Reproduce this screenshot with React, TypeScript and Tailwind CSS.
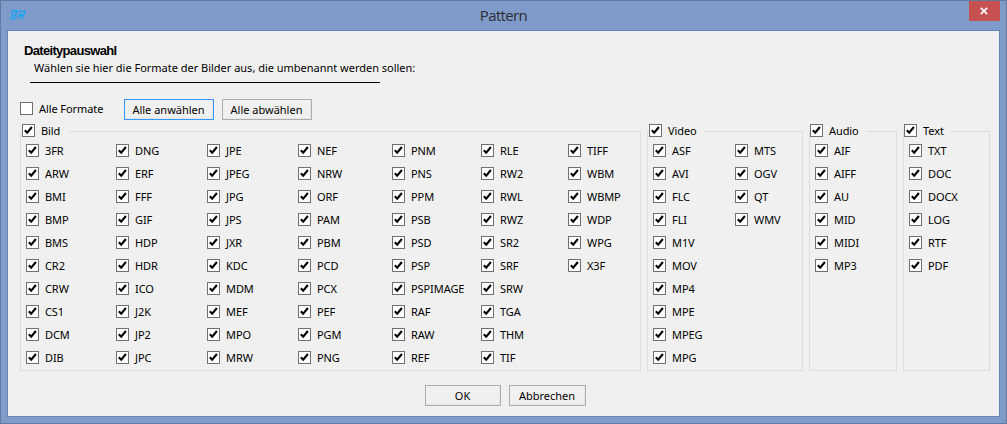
import { useState } from 'react';

type Group = {
  name: string;
  box: string;
  legend: string;
  body: string;
  columns: { width: string; items: string[] }[];
};

const groups: Group[] = [
  {
    name: 'Bild',
    box: 'w-[621px]',
    legend: 'w-[47px] ml-px',
    body: 'pl-[5px]',
    columns: [
      { width: 'w-[90px]', items: ['3FR', 'ARW', 'BMI', 'BMP', 'BMS', 'CR2', 'CRW', 'CS1', 'DCM', 'DIB'] },
      { width: 'w-[91px]', items: ['DNG', 'ERF', 'FFF', 'GIF', 'HDP', 'HDR', 'ICO', 'J2K', 'JP2', 'JPC'] },
      { width: 'w-[91px]', items: ['JPE', 'JPEG', 'JPG', 'JPS', 'JXR', 'KDC', 'MDM', 'MEF', 'MPO', 'MRW'] },
      { width: 'w-[94px]', items: ['NEF', 'NRW', 'ORF', 'PAM', 'PBM', 'PCD', 'PCX', 'PEF', 'PGM', 'PNG'] },
      { width: 'w-[89px]', items: ['PNM', 'PNS', 'PPM', 'PSB', 'PSD', 'PSP', 'PSPIMAGE', 'RAF', 'RAW', 'REF'] },
      { width: 'w-[87px]', items: ['RLE', 'RW2', 'RWL', 'RWZ', 'SR2', 'SRF', 'SRW', 'TGA', 'THM', 'TIF'] },
      { width: 'w-[66px]', items: ['TIFF', 'WBM', 'WBMP', 'WDP', 'WPG', 'X3F'] },
    ],
  },
  {
    name: 'Video',
    box: 'w-[156px]',
    legend: 'w-[56px] ml-px',
    body: 'pl-[5px]',
    columns: [
      { width: 'w-[82px]', items: ['ASF', 'AVI', 'FLC', 'FLI', 'M1V', 'MOV', 'MP4', 'MPE', 'MPEG', 'MPG'] },
      { width: 'w-[60px]', items: ['MTS', 'OGV', 'QT', 'WMV'] },
    ],
  },
  {
    name: 'Audio',
    box: 'w-[88px]',
    legend: 'w-[57px]',
    body: 'pl-[5px]',
    columns: [{ width: 'w-[70px]', items: ['AIF', 'AIFF', 'AU', 'MID', 'MIDI', 'MP3'] }],
  },
  {
    name: 'Text',
    box: 'w-[87px]',
    legend: 'w-[46px]',
    body: 'pl-[5px]',
    columns: [{ width: 'w-[70px]', items: ['TXT', 'DOC', 'DOCX', 'LOG', 'RTF', 'PDF'] }],
  },
];

function Check({ label, initial = true }: { label: string; initial?: boolean }) {
  const [on, setOn] = useState(initial);
  return (
    <button
      type="button"
      role="checkbox"
      aria-checked={on}
      onClick={() => setOn(!on)}
      className="flex h-[13px] items-center gap-[6px] whitespace-nowrap"
    >
      <span className="flex size-[13px] shrink-0 items-center justify-center border border-[#707070] bg-white">
        {on && (
          <svg viewBox="0 0 11 11" className="size-[11px]">
            <path d="M1.8 5.2 4.2 7.7 8.9 2" fill="none" stroke="#000" strokeWidth="2.1" />
          </svg>
        )}
      </span>
      <span className="leading-[13px] tracking-[-0.08px]">{label}</span>
    </button>
  );
}

function PushButton({ label, look }: { label: string; look: string }) {
  return (
    <button
      type="button"
      className={`h-[21px] border bg-[#f0f0f0] pt-px pr-px shadow-[inset_-1px_-1px_0_#e6e6e6] ${look}`}
    >
      {label}
    </button>
  );
}

function GroupBox({ group }: { group: Group }) {
  return (
    <section className={`h-[240px] border border-[#dcdcdc] ${group.box}`}>
      <div className={`-mt-[8px] h-[20px] bg-[#f0f0f0] ${group.legend}`}>
        <Check label={group.name} />
      </div>
      <div className={`flex ${group.body}`}>
        {group.columns.map((column) => (
          <div key={column.items[0]} className={`flex flex-col gap-[10px] ${column.width}`}>
            {column.items.map((item) => (
              <Check key={item} label={item} />
            ))}
          </div>
        ))}
      </div>
    </section>
  );
}

export default function App() {
  return (
    <div className="flex h-[424px] w-[1007px] flex-col border border-[#64799d] bg-[#7e9bc9] px-[6px] pb-[6px] font-['Noto_Sans','Open_Sans',sans-serif] text-[11px] text-black">
      <header className="flex h-[29px] shrink-0 justify-between">
        <div className="w-[31px] pt-[5px] pl-[3px]">
          <svg viewBox="0 0 16 16" className="size-[16px]" fill="none" stroke="#12a8fb" strokeWidth="1.4">
            <path d="M2 4.8H7L6.5 7.4 4.8 8.6 5.9 9.6 5.3 11.6 4 12.6H1.2L2.9 5M9.6 7.4 8.4 13.2M9 5.5H14.8L14.3 8.4 13 9.2H9.4M11 9.4 13.4 13.4" />
          </svg>
        </div>
        <h1 className="pt-[4px] font-['Open_Sans','Noto_Sans',sans-serif] text-[15px] leading-[20px] tracking-[-0.65px] text-[#2b2d33]">
          Pattern
        </h1>
        <button
          type="button"
          aria-label="Schließen"
          className="flex h-[20px] w-[31px] items-center justify-center bg-[#c75050]"
        >
          <svg viewBox="0 0 8 8" className="size-[8px]">
            <path d="M.8.8 7.2 7.2M7.2.8.8 7.2" stroke="#fff" strokeWidth="1.7" />
          </svg>
        </button>
      </header>
      <main className="flex h-[387px] flex-col border border-[#6584b0] bg-[#f0f0f0] pl-[12px]">
        <h2 className="mt-[12px] ml-[4px] h-[16px] font-['Liberation_Sans',sans-serif] text-[13px] leading-[16px] font-bold tracking-[-0.68px]">
          Dateitypauswahl
        </h2>
        <p className="mt-0 ml-[14px] h-[19px] leading-[18px] tracking-[-0.014px]">
          Wählen sie hier die Formate der Bilder aus, die umbenannt werden sollen:
        </p>
        <hr className="mt-[4px] ml-[10px] h-px w-[350px] border-0 bg-black" />
        <div className="mt-[16px] flex h-[21px]">
          <div className="w-[104px] pt-[3px]">
            <Check label="Alle Formate" initial={false} />
          </div>
          <div className="flex gap-[8px]">
            <PushButton label="Alle anwählen" look="w-[90px] border-[#3399ff]" />
            <PushButton label="Alle abwählen" look="w-[90px] border-[#acacac]" />
          </div>
        </div>
        <div className="mt-[11px] flex gap-[6px]">
          {groups.map((group) => (
            <GroupBox key={group.name} group={group} />
          ))}
        </div>
        <div className="mt-[14px] ml-[405px] flex gap-[8px]">
          <PushButton label="OK" look="w-[76px] border-[#acacac]" />
          <PushButton label="Abbrechen" look="w-[77px] border-[#acacac]" />
        </div>
      </main>
    </div>
  );
}
